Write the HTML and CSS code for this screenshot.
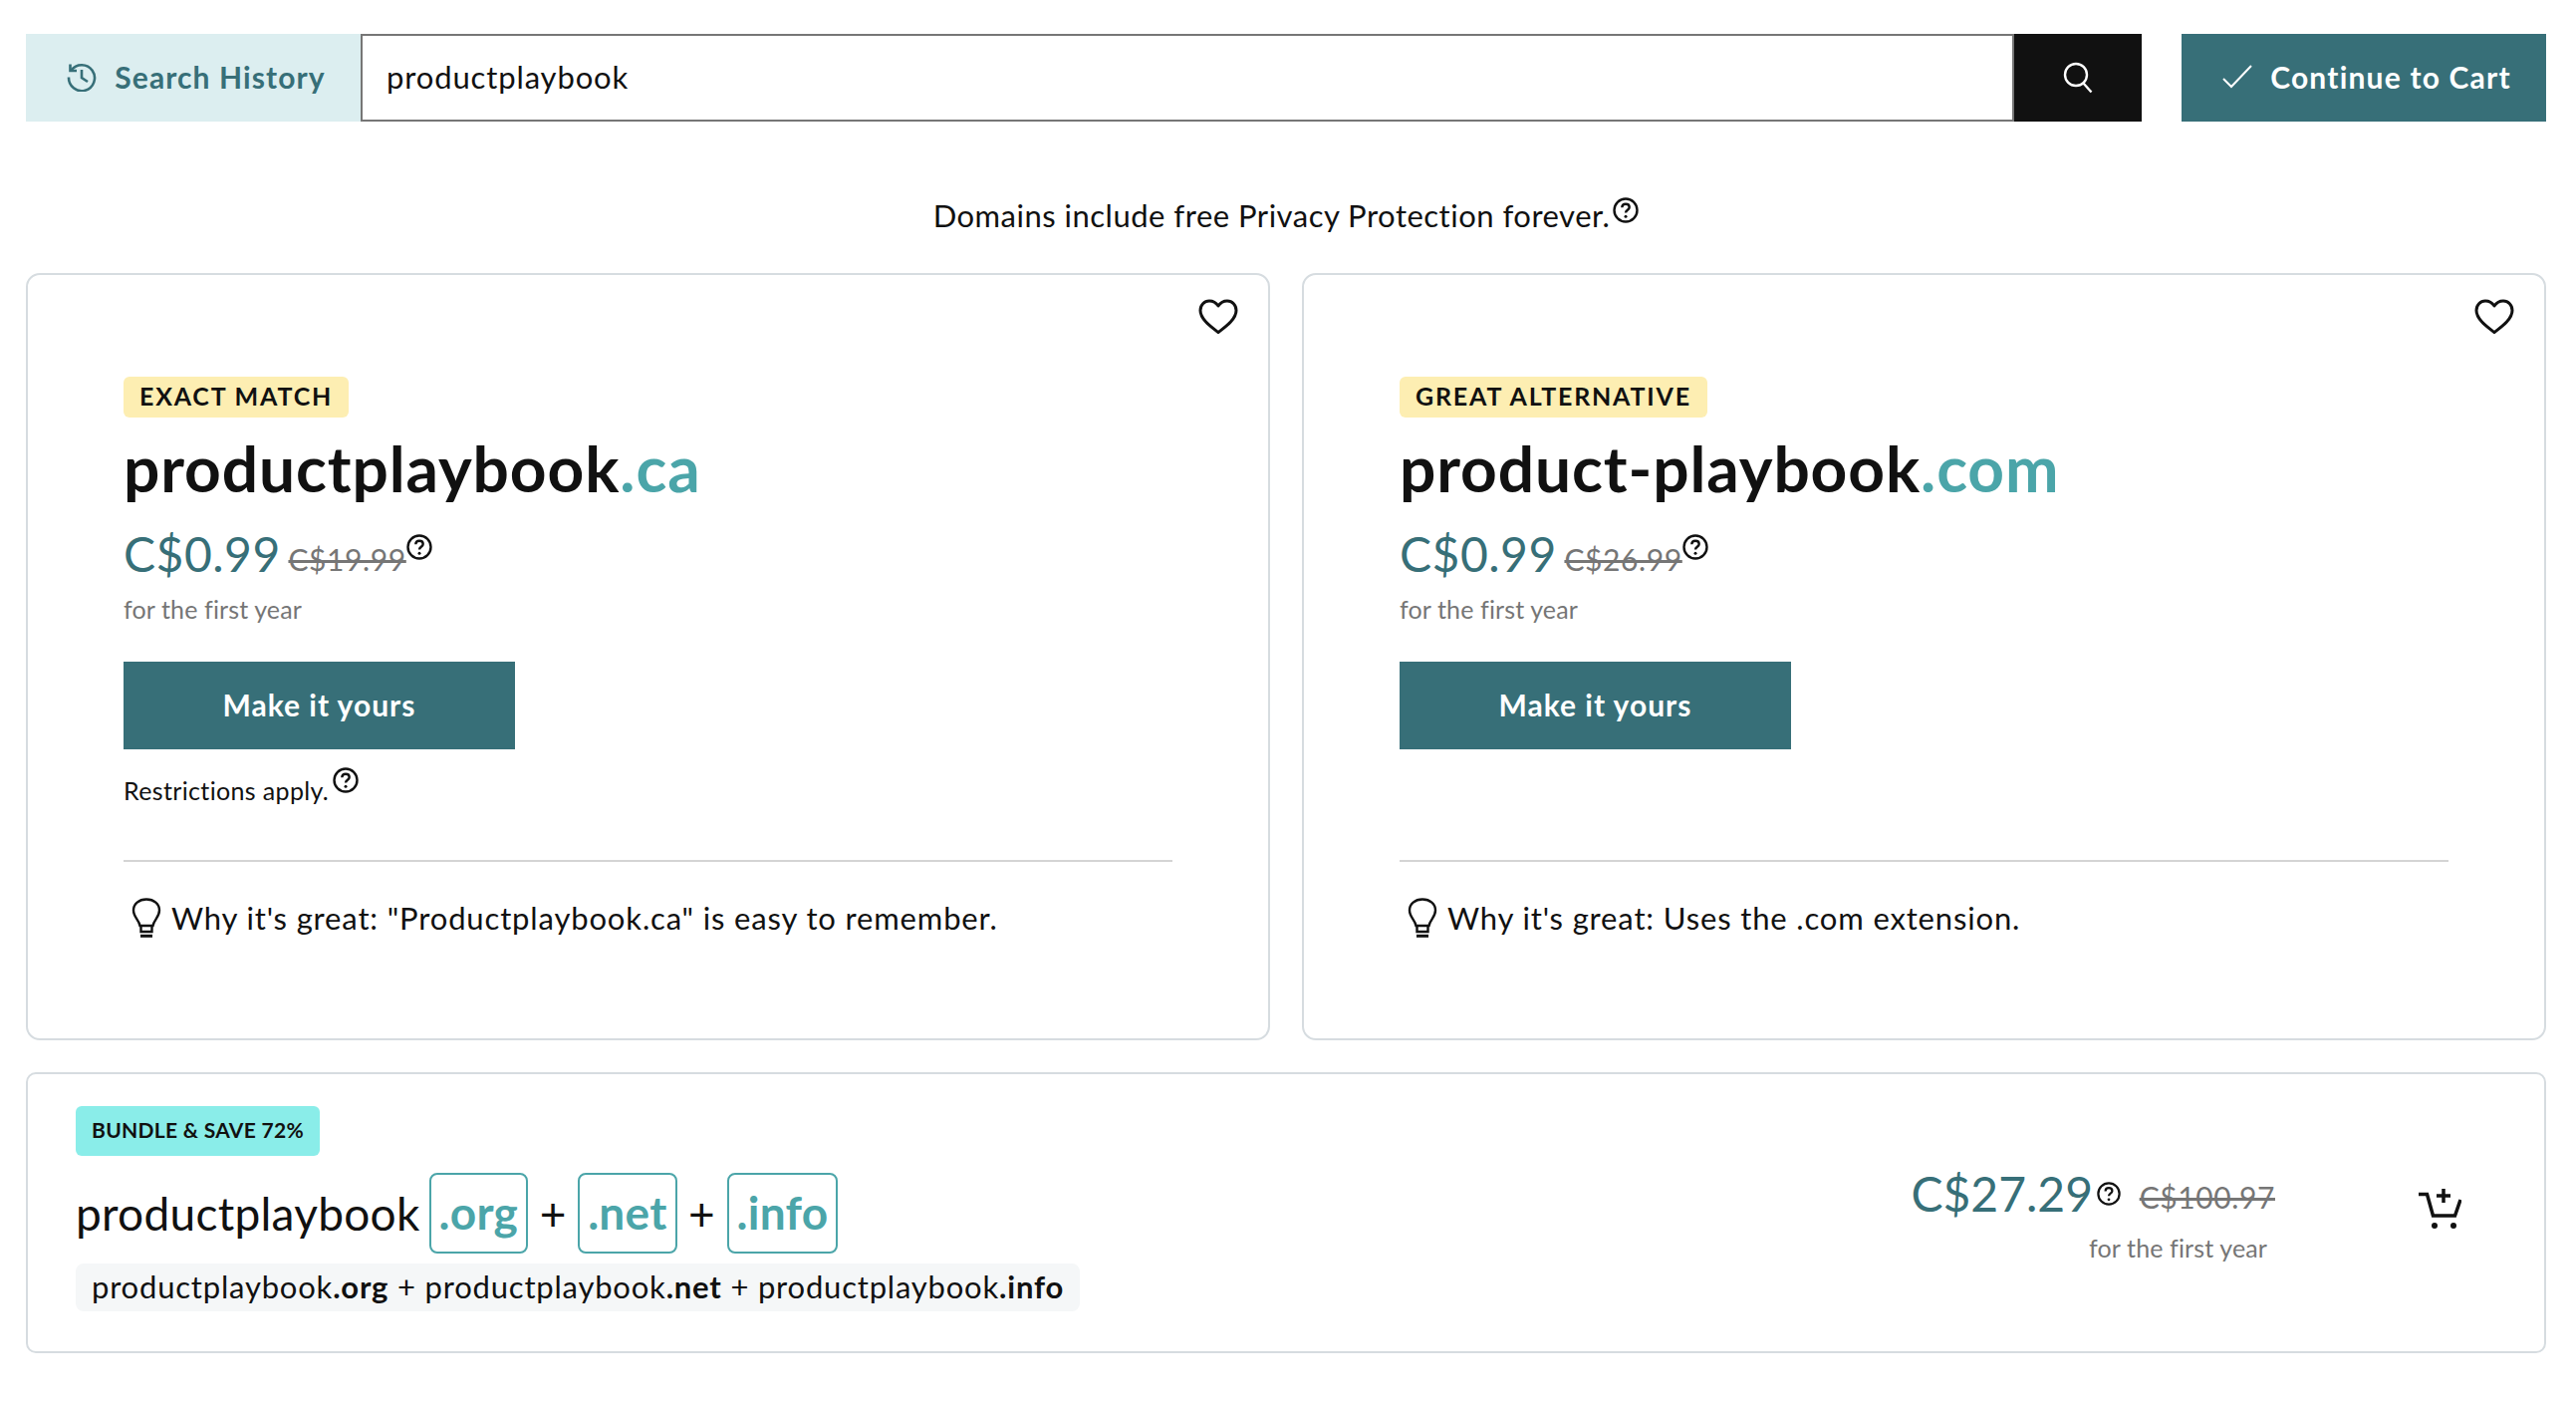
FILE: index.html
```html
<!DOCTYPE html>
<html lang="en">

<head>
    <meta charset="UTF-8">
    <meta name="viewport" content="width=device-width, initial-scale=1.0">
    <title>Domain search</title>
    <link rel="stylesheet" href="styles.css">
</head>

<body>
    <svg class="defs" width="0" height="0">
        <symbol id="help" viewBox="0 0 26 26">
            <circle cx="13" cy="13" r="11.5" fill="none" stroke="currentColor" stroke-width="2.400"/>
            <path d="M9.300 10.200c0-2.200 1.600-3.500 3.700-3.500s3.700 1.300 3.700 3.200c0 2.800-3.700 2.800-3.700 5.600" fill="none" stroke="currentColor" stroke-width="2.400"/>
            <circle cx="13" cy="19.300" r="1.500" fill="currentColor"/>
        </symbol>
        <symbol id="heart" viewBox="0 0 40 36">
            <path d="M20 33.500C13 28 2 20.500 2 11.500 2 6 6 2 11 2c4 0 7 2 9 5 2-3 5-5 9-5 5 0 9 4 9 9.500 0 9-11 16.500-18 22z" fill="none" stroke="currentColor" stroke-width="3" stroke-linejoin="round"/>
        </symbol>
        <symbol id="bulb" viewBox="0 0 30 40">
            <path d="M8.500 28C7.500 22 2 19.500 2 12.500 2 6 7.500 1.500 15 1.500S28 6 28 12.500c0 7-5.500 9.500-6.500 15.500z" fill="none" stroke="currentColor" stroke-width="2.400"/>
            <path d="M9.500 28v6h11v-6" fill="none" stroke="currentColor" stroke-width="2.400"/>
            <path d="M9 38.300h12" stroke="currentColor" stroke-width="3"/>
        </symbol>
    </svg>

    <div class="search-bar">
        <div class="history">
            <svg class="history-icon" viewBox="0 0 30 30" width="30" height="30">
                <path d="M4.500 8.500A13 13 0 1 1 2 15.500" fill="none" stroke="currentColor" stroke-width="2.600"/>
                <path d="M3.500 2.500v6.500h6.500" fill="none" stroke="currentColor" stroke-width="2.600"/>
                <path d="M15 8v8l6 4" fill="none" stroke="currentColor" stroke-width="2.600"/>
            </svg>
            <span>Search History</span>
        </div>
        <div class="search-input">productplaybook</div>
        <div class="search-btn">
            <svg viewBox="0 0 32 32" width="32" height="32">
                <circle cx="14" cy="13" r="11" fill="none" stroke="#fff" stroke-width="2.400"/>
                <path d="M21.500 21.500l8 9" fill="none" stroke="#fff" stroke-width="2.400"/>
            </svg>
        </div>
        <div class="cart-btn">
            <svg viewBox="0 0 30 24" width="30" height="24">
                <path d="M1 14l8 8L29 1" fill="none" stroke="#fff" stroke-width="2"/>
            </svg>
            <span>Continue to Cart</span>
        </div>
    </div>

    <p class="privacy">Domains include free Privacy Protection forever.<svg class="help help-privacy"><use href="#help"/></svg></p>

    <div class="cards">
        <div class="card">
            <svg class="heart"><use href="#heart"/></svg>
            <span class="chip">EXACT MATCH</span>
            <h2 class="domain">productplaybook<span class="tld">.ca</span></h2>
            <div class="price-row">
                <span class="price">C$0.99</span>
                <span class="old-price">C$19.99</span><svg class="help help-price"><use href="#help"/></svg>
            </div>
            <div class="term">for the first year</div>
            <div class="buy-btn">Make it yours</div>
            <div class="restrict">Restrictions apply.<svg class="help help-restrict"><use href="#help"/></svg></div>
            <div class="why">
                <svg class="bulb"><use href="#bulb"/></svg>
                <span>Why it's great: "Productplaybook.ca" is easy to remember.</span>
            </div>
        </div>

        <div class="card">
            <svg class="heart"><use href="#heart"/></svg>
            <span class="chip">GREAT ALTERNATIVE</span>
            <h2 class="domain">product-playbook<span class="tld">.com</span></h2>
            <div class="price-row">
                <span class="price">C$0.99</span>
                <span class="old-price">C$26.99</span><svg class="help help-price"><use href="#help"/></svg>
            </div>
            <div class="term">for the first year</div>
            <div class="buy-btn">Make it yours</div>
            <div class="restrict"></div>
            <div class="why">
                <svg class="bulb"><use href="#bulb"/></svg>
                <span>Why it's great: Uses the .com extension.</span>
            </div>
        </div>
    </div>

    <div class="bundle">
        <div class="bundle-left">
            <span class="chip chip-bundle">BUNDLE &amp; SAVE 72%</span>
            <div class="bundle-name">
                <span>productplaybook</span>
                <span class="tld-box">.org</span>
                <span class="plus">+</span>
                <span class="tld-box">.net</span>
                <span class="plus">+</span>
                <span class="tld-box">.info</span>
            </div>
            <div class="bundle-list">productplaybook<b>.org</b> + productplaybook<b>.net</b> + productplaybook<b>.info</b></div>
        </div>
        <div class="bundle-right">
            <div class="bundle-price-wrap">
                <div class="bundle-price-row">
                    <span class="bundle-price">C$27.29</span><svg class="help help-bundle"><use href="#help"/></svg>
                    <span class="old-price bundle-old">C$100.97</span>
                </div>
                <div class="term bundle-term">for the first year</div>
            </div>
            <svg class="add-cart" viewBox="0 0 44 40" width="44" height="40">
                <path d="M1 5.500h8.500L15.500 27h22L43 11" fill="none" stroke="#111" stroke-width="3.500"/>
                <path d="M26 0v14M19 7h14" fill="none" stroke="#111" stroke-width="3.500"/>
                <circle cx="17" cy="37" r="3" fill="#111"/>
                <circle cx="36" cy="37" r="3" fill="#111"/>
            </svg>
        </div>
    </div>
</body>

</html>
```

FILE: styles.css
```css
body {
    margin: 0;
    padding: 34px 30px 0 26px;
    font-family: Lato, "Open Sans", Arial, sans-serif;
    background: white;
    color: #111;
    font-size: 30px;
}

.defs {
    position: absolute;
}

/* Search bar */
.search-bar {
    display: flex;
    height: 88px;
}

.history {
    width: 336px;
    padding: 0 0 2px 6px;
    box-sizing: border-box;
    background: #dceef0;
    color: #376f78;
    font-weight: 700;
    letter-spacing: 1.1px;
    display: flex;
    align-items: center;
    justify-content: center;
    gap: 18px;
}

.search-input {
    flex: 1;
    border: 2px solid #767676;
    display: flex;
    align-items: center;
    padding: 0 0 2px 24px;
    font-size: 31px;
    letter-spacing: 0.87px;
}

.search-btn {
    width: 128px;
    background: #111;
    display: flex;
    align-items: center;
    justify-content: center;
}

.cart-btn {
    width: 366px;
    margin-left: 40px;
    padding: 0 0 2px 6px;
    box-sizing: border-box;
    background: #376f78;
    color: white;
    font-weight: 700;
    letter-spacing: 1.2px;
    display: flex;
    align-items: center;
    justify-content: center;
    gap: 18px;
}

.privacy {
    margin: 74px 0 0;
    height: 40px;
    line-height: 40px;
    text-align: center;
    font-size: 31px;
    letter-spacing: 0.5px;
}

.help {
    width: 26px;
    height: 26px;
    color: #111;
}

.help-privacy {
    margin-left: 3px;
    vertical-align: 4px;
}

/* Cards */
.cards {
    display: grid;
    grid-template-columns: 1fr 1fr;
    gap: 32px;
    margin-top: 38px;
}

.card {
    position: relative;
    height: 770px;
    box-sizing: border-box;
    border: 2px solid #d6dce0;
    border-radius: 14px;
    padding: 102px 96px 0;
}

.heart {
    position: absolute;
    top: 24px;
    right: 30px;
    width: 40px;
    height: 36px;
    color: #111;
}

.chip {
    display: inline-block;
    height: 41px;
    line-height: 39px;
    padding: 0 16px;
    background: #fdeeb2;
    border-radius: 6px;
    font-size: 25px;
    font-weight: 700;
    letter-spacing: 1.8px;
    vertical-align: top;
}

.domain {
    margin: 13px 0 0;
    font-size: 64px;
    line-height: 76px;
    font-weight: 700;
    letter-spacing: 0.9px;
}

.tld {
    color: #4ba5a9;
}

.price-row {
    margin-top: 18px;
    height: 60px;
    line-height: 60px;
}

.price {
    font-size: 48px;
    color: #376f78;
    letter-spacing: 0.5px;
}

.old-price {
    font-size: 30px;
    color: #767676;
    letter-spacing: 0.6px;
    vertical-align: 1px;
    text-decoration: line-through;
    text-decoration-thickness: 3px;
}

.help-price {
    vertical-align: 12px;
}

.term {
    margin-top: 8px;
    font-size: 25px;
    line-height: 34px;
    letter-spacing: 0.13px;
    color: #767676;
}

.buy-btn {
    width: 393px;
    height: 88px;
    line-height: 86px;
    margin-top: 36px;
    background: #376f78;
    color: white;
    font-weight: 700;
    letter-spacing: 1px;
    text-align: center;
}

.restrict {
    height: 56px;
    margin-top: 18px;
    font-size: 25px;
    line-height: 36px;
    letter-spacing: 0.35px;
}

.help-restrict {
    margin-left: 4px;
    vertical-align: 7px;
}

.why {
    display: flex;
    align-items: center;
    gap: 10px;
    margin-top: 37px;
    border-top: 2px solid #d4d4d4;
    padding-top: 36px;
    padding-left: 8px;
    line-height: 40px;
    font-size: 31px;
    letter-spacing: 0.85px;
}

.bulb {
    width: 30px;
    height: 40px;
    flex: none;
}

/* Bundle */
.bundle {
    display: flex;
    justify-content: space-between;
    height: 282px;
    box-sizing: border-box;
    margin-top: 32px;
    border: 2px solid #d6dce0;
    border-radius: 10px;
    padding: 32px 0 0 48px;
}

.chip-bundle {
    height: 50px;
    line-height: 47px;
    background: #8aede9;
    font-size: 21px;
    letter-spacing: 0.3px;
}

.bundle-name {
    display: flex;
    align-items: center;
    margin-top: 18px;
    font-size: 46px;
    letter-spacing: 0.27px;
    height: 81px;
    padding-bottom: 2px;
    box-sizing: border-box;
}

.tld-box {
    height: 81px;
    line-height: 75px;
    box-sizing: border-box;
    border: 2px solid #4ba5a9;
    border-radius: 8px;
    padding: 0 8px;
    color: #4ba5a9;
    font-weight: 700;
    margin-left: 9px;
}

.plus {
    margin-left: 9px;
    width: 32px;
    text-align: center;
}

.bundle-list {
    display: inline-block;
    margin-top: 9px;
    height: 48px;
    line-height: 46px;
    padding: 0 16px;
    background: #f5f7f8;
    border-radius: 8px;
    font-size: 31px;
    letter-spacing: 0.8px;
}

.bundle-right {
    display: flex;
    align-items: flex-start;
    padding-top: 58px;
    padding-right: 83px;
    gap: 143px;
}

.bundle-price-wrap {
    display: flex;
    flex-direction: column;
    align-items: flex-end;
}

.bundle-price-row {
    height: 60px;
    line-height: 60px;
}

.bundle-price {
    font-size: 48px;
    color: #376f78;
}

.help-bundle {
    width: 24px;
    height: 24px;
    margin-left: 4px;
    vertical-align: 6px;
}

.bundle-old {
    margin-left: 11px;
    vertical-align: 3px;
}

.bundle-term {
    margin-top: 7px;
    margin-right: 8px;
}

.add-cart {
    margin-top: 25px;
}
```
